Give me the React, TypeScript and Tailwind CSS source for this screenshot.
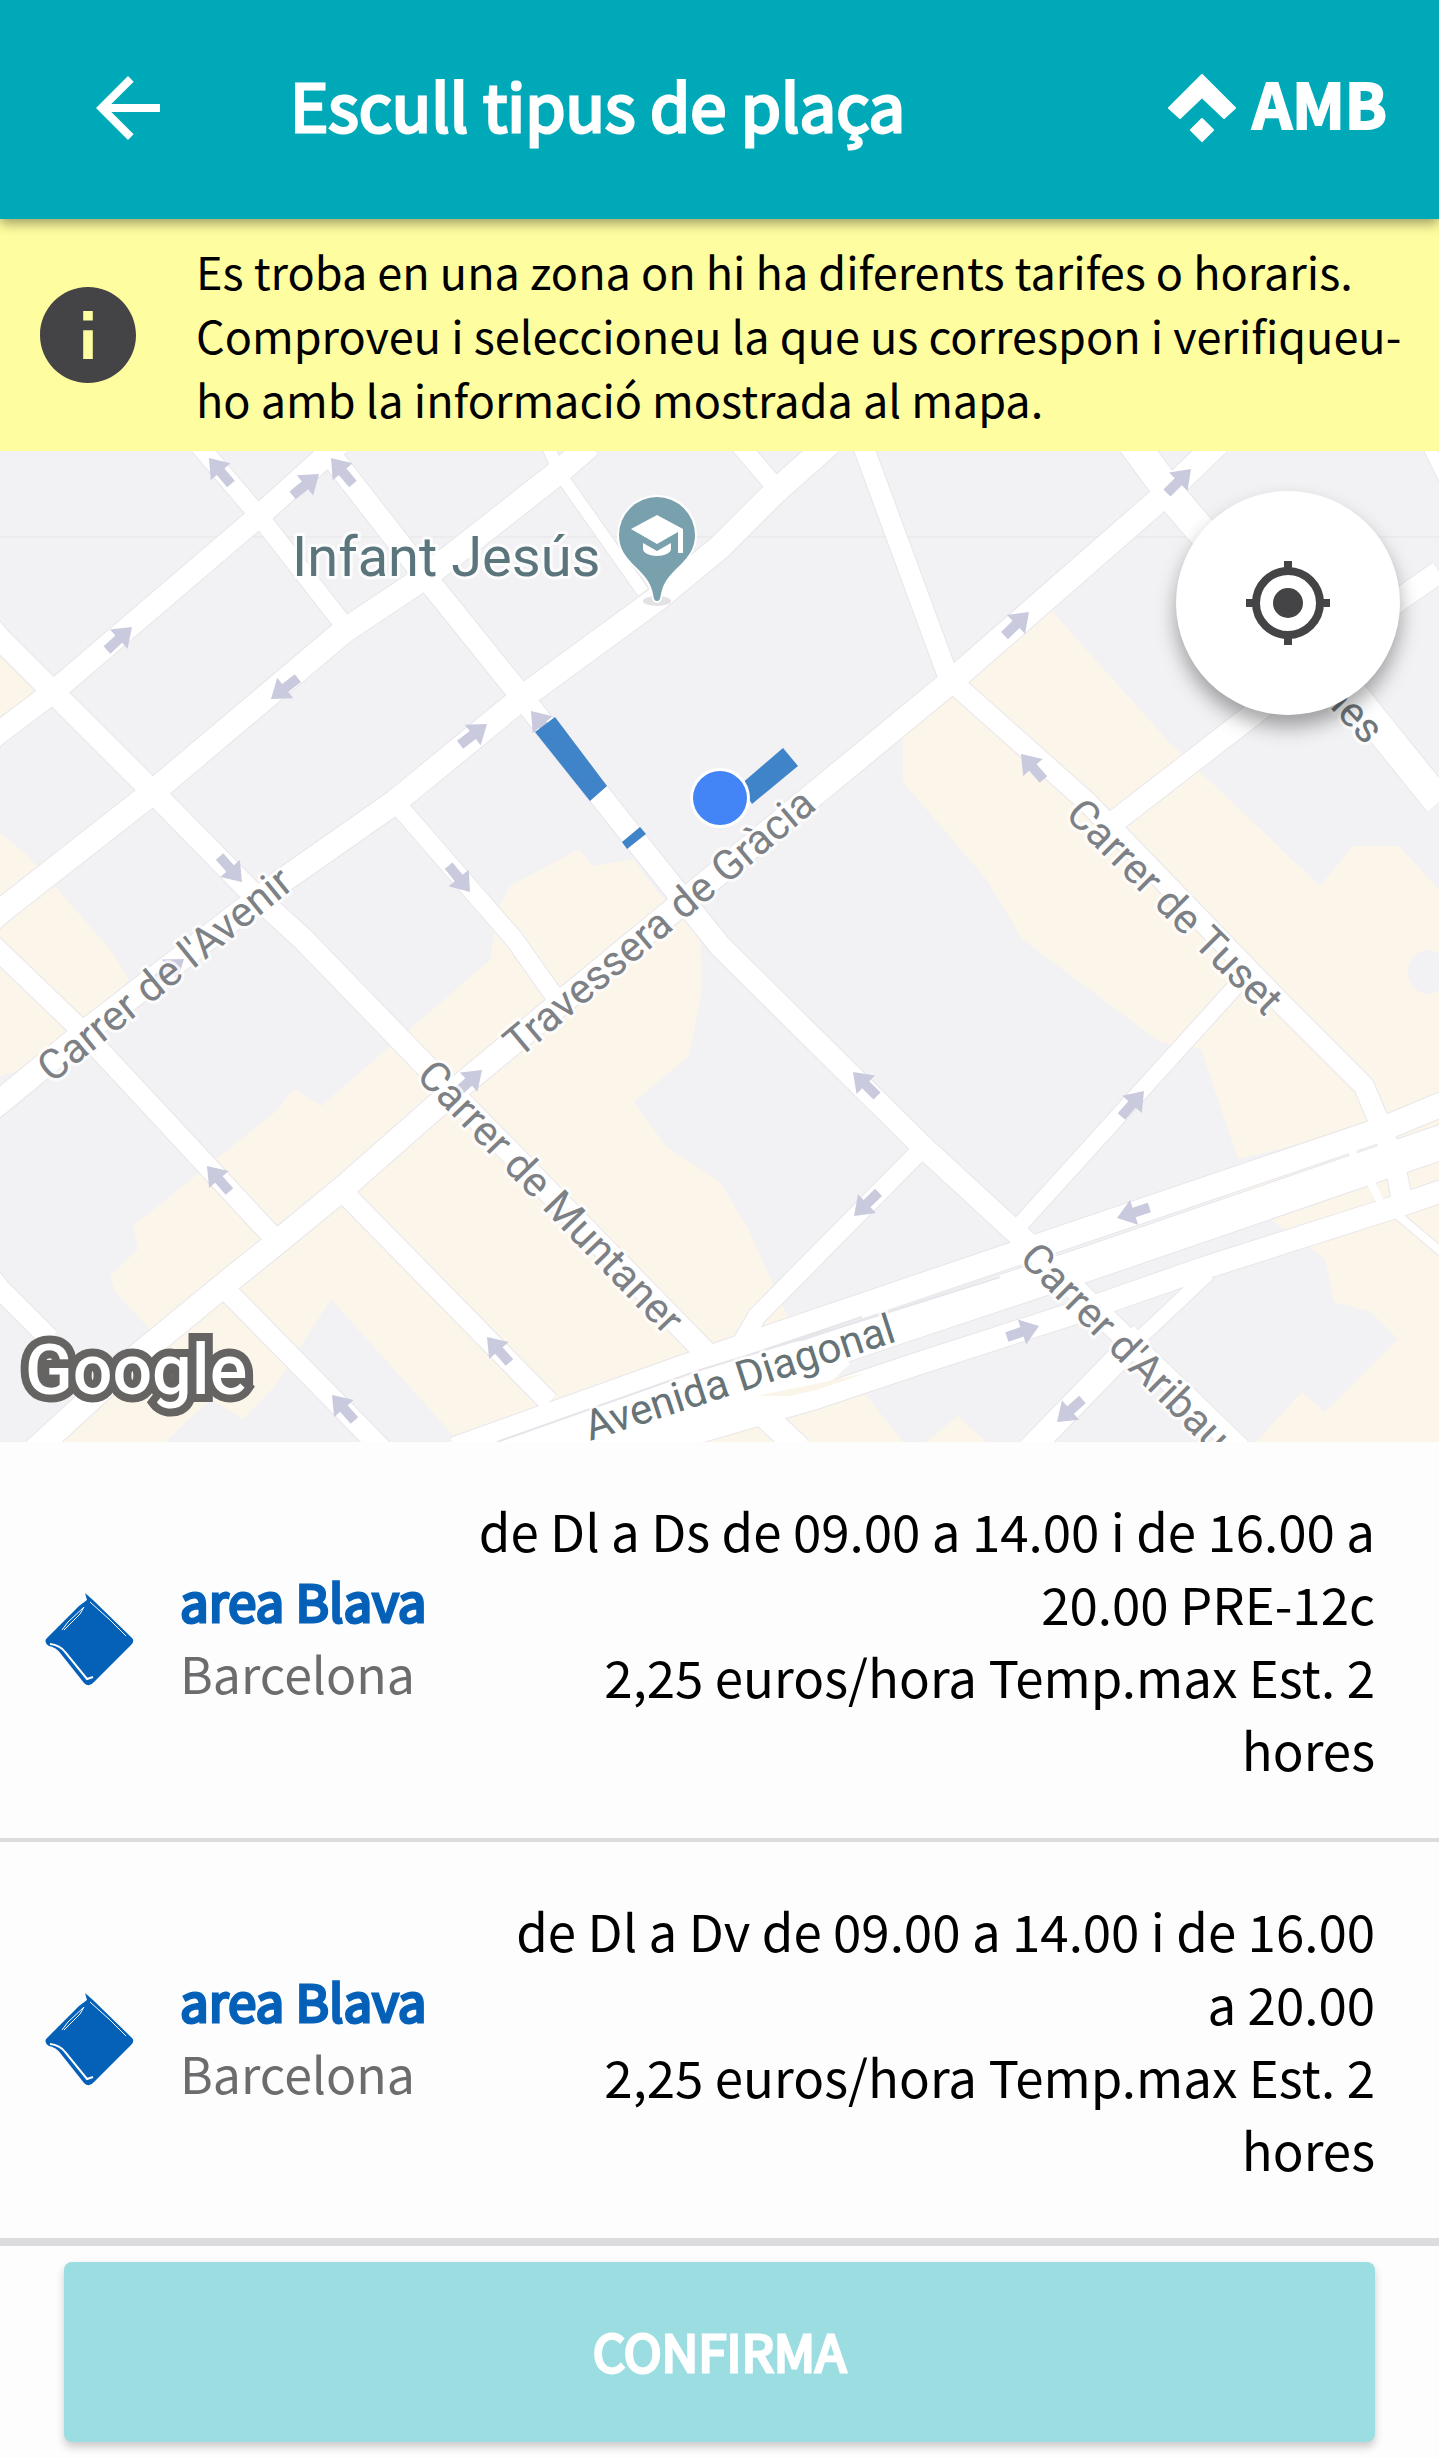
import React from 'react';

interface Zone {
  id: string;
  name: string;
  city: string;
  schedule: string;
  price: string;
}

interface Label {
  text: string;
  x: number;
  y: number;
  angle: number;
  color: string;
}

const ZONES: Zone[] = [
  {
    id: 'pre-12c',
    name: 'area Blava',
    city: 'Barcelona',
    schedule: 'de Dl a Ds de 09.00 a 14.00 i de 16.00 a 20.00 PRE-12c',
    price: '2,25 euros/hora Temp.max Est. 2 hores',
  },
  {
    id: 'dl-dv',
    name: 'area Blava',
    city: 'Barcelona',
    schedule: 'de Dl a Dv de 09.00 a 14.00 i de 16.00 a\u00a020.00',
    price: '2,25 euros/hora Temp.max Est. 2 hores',
  },
];

// Commercial blocks
const AREAS = [
  'M0 657L39 693L0 717Z',
  'M0 833L28 857L110 950L129 980L92 1027L34 1067L0 1077Z',
  'M579 850L510 887L496 913L491 960L321 1107L294 1090L275 1113L133 1227L138 1250L110 1277L115 1293L147 1327L156 1345L60 1443H165L211 1400L243 1420L275 1387L331 1300L459 1443L700 1355L789 1320L748 1230L720 1183L666 1147L634 1103L689 1057L702 990L700 930L657 893L634 860L592 867Z',
  'M1050 610L1169 743L1320 887L1353 847H1398L1439 890V1113L1238 1160L1201 1050L1160 1043L1022 940L986 880L903 783V737L949 697Z',
  'M1220 1193L1270 1220L1325 1260L1334 1303L1371 1313L1398 1340L1325 1413L1302 1393L1256 1443H1439V1110Z',
  'M650 1443L720 1400L830 1370L867 1397L903 1443Z',
  'M926 1443L958 1417L986 1443Z',
];

const ROADS: { d: string; w: number }[] = [
  { d: 'M-10 741L0 733L53 693L259 517L340 444', w: 22 },
  { d: 'M-10 922L0 913L153 793L344 632L425 578L560 472L590 446', w: 24 },
  { d: 'M-10 1111L0 1103L85 1033L275 887L395 803L523 698L657 600L720 548L775 493L830 444', w: 24 },
  { d: 'M34 1452L140 1355L230 1281L275 1245L342 1190L441 1103L528 1031L812 797L954 680L1160 500L1218 444', w: 24 },
  { d: 'M-10 628L0 640L53 693L153 793L248 890L303 940L422 1063L707 1355', w: 22 },
  { d: 'M197 444L259 517L347 630', w: 18 },
  { d: 'M321 444L427 580L521 697L680 897L720 947L922 1147L1023 1240L1240 1450', w: 22 },
  { d: 'M395 803L514 940L560 1005', w: 18 },
  { d: 'M546 444L562 478L643 593', w: 12 },
  { d: 'M738 444L780 493', w: 18 },
  { d: 'M862 444L949 680L1087 803L1284 1007L1364 1087L1380 1125L1394 1160L1403 1207', w: 20 },
  { d: 'M1133 444L1174 500L1197 527L1348 690L1439 803', w: 30 },
  { d: 'M1439 573L1400 600L1247 720L1110 826', w: 22 },
  { d: 'M1427 444L1445 480', w: 12 },
  { d: 'M-8 945L0 953L80 1030L275 1240', w: 20 },
  { d: 'M-8 1280L0 1290L50 1340', w: 20 },
  { d: 'M225 1290L382 1450', w: 20 },
  { d: 'M347 1197L549 1403', w: 20 },
  { d: 'M922 1150L757 1317L738 1350', w: 18 },
  { d: 'M1018 1228L1236 987', w: 16 },
  { d: 'M1208 1275L1142 1337', w: 14 },
  { d: 'M1142 1335L1030 1450', w: 24 },
  { d: 'M750 1403L800 1450', w: 24 },
  { d: 'M1394 1213L1445 1256', w: 8 },
  { d: 'M1445 1104L1380 1131L1041 1246L720 1355L455 1450', w: 24 },
  { d: 'M1445 1142L1087 1265L903 1326L720 1388L560 1440', w: 34 },
  { d: 'M1445 1191L1389 1210L1201 1270L1078 1313L926 1362L812 1400L640 1450', w: 22 },
];

// One-way arrows: tail x/y, tip x/y
const ARROWS = [
  [231, 485, 209, 459],
  [293, 496, 319, 475],
  [353, 485, 331, 459],
  [107, 651, 132, 628],
  [298, 679, 271, 700],
  [461, 745, 487, 725],
  [553, 738, 531, 712],
  [220, 858, 242, 883],
  [449, 867, 470, 893],
  [1168, 493, 1191, 470],
  [1004, 637, 1029, 613],
  [1043, 780, 1021, 755],
  [461, 1090, 482, 1071],
  [229, 1192, 207, 1167],
  [509, 1363, 487, 1338],
  [354, 1421, 332, 1396],
  [160, 978, 184, 960],
  [877, 1097, 853, 1073],
  [1121, 1118, 1144, 1092],
  [878, 1194, 854, 1217],
  [1148, 1209, 1117, 1219],
  [1007, 1338, 1039, 1327],
  [1082, 1401, 1057, 1423],
];

const LABELS: Label[] = [
  { text: "Carrer de l'Avenir", x: 52, y: 1085, angle: -39, color: '#7d8185' },
  { text: 'Travessera de Gràcia', x: 519, y: 1060, angle: -40, color: '#7d8185' },
  { text: 'Carrer de Muntaner', x: 415, y: 1078, angle: 46, color: '#7d8185' },
  { text: 'Carrer de Tuset', x: 1064, y: 817, angle: 45, color: '#7d8185' },
  { text: "Carrer d'Aribau", x: 1018, y: 1261, angle: 45, color: '#7d8185' },
  { text: 'Avenida Diagonal', x: 590, y: 1442, angle: -18, color: '#667377' },
  { text: 'nes', x: 1320, y: 698, angle: 47, color: '#6f777b' },
];

const ParkingMap: React.FC = () => (
  <svg viewBox="0 452 1439 991" className="block w-full h-auto bg-[#f2f1f4]" role="img" aria-label="Mapa de la zona">
    <g fill="#fcf5ea">
      {AREAS.map(d => <path key={d} d={d} />)}
    </g>
    <ellipse cx="1428" cy="973" rx="20" ry="22" fill="#f2f1f4" />
    <path d="M0 538H1439" stroke="#e6e6e9" strokeWidth="1" />

    {/* Streets: thin casing first, then the white surface */}
    <g fill="none" stroke="#e7e6ea" strokeLinejoin="round">
      {ROADS.map(r => <path key={r.d} d={r.d} strokeWidth={r.w + 2} />)}
    </g>
    <g fill="none" stroke="#fff" strokeLinejoin="round">
      {ROADS.map(r => <path key={r.d} d={r.d} strokeWidth={r.w} />)}
    </g>
    <path d="M455 1450L707 1352L760 1345L830 1340L850 1365L812 1400L650 1450Z" fill="#fff" />
    <path d="M497 1443L700 1371L870 1319L1000 1278M740 1359L862 1318" fill="none" stroke="#e7e5ea" strokeWidth="2" />
    <path d="M756 1397L810 1386L866 1374L820 1390L790 1397Z" fill="#faf5e8" />
    <path d="M1350 1143L1356 1166M1368 1178L1380 1202" stroke="#fff" strokeWidth="8" />

    <g fill="#c9cadd">
      {ARROWS.map(([x1, y1, x2, y2]) => {
        const angle = (Math.atan2(y2 - y1, x2 - x1) * 180) / Math.PI;
        return (
          <path
            key={`${x1}-${y1}`}
            d="M0 0L-18 -13V-5H-34V5H-18V13Z"
            transform={`translate(${x2} ${y2}) rotate(${angle})`}
          />
        );
      })}
    </g>

    {/* Parking stretches */}
    <g fill="#3f83c9">
      <path d="M555 718L607 787L590 802L535 733Z" />
      <path d="M640 828L646 835L627 850L622 843Z" />
      <path d="M783 749L798 767L752 805L740 786Z" />
    </g>

    <g fontFamily="Roboto, sans-serif" stroke="#fff" strokeOpacity="0.8" strokeWidth="6" strokeLinejoin="round" paintOrder="stroke">
      {LABELS.map(l => (
        <text key={l.text} fontSize="42" fill={l.color} transform={`translate(${l.x} ${l.y}) rotate(${l.angle})`}>
          {l.text}
        </text>
      ))}
      <text x="292" y="577" fontSize="56" fill="#5a757c">Infant Jesús</text>
    </g>

    <circle cx="720" cy="799" r="30" fill="#fff" />
    <circle cx="720" cy="799" r="27" fill="#4384f6" />

    {/* School pin */}
    <ellipse cx="657" cy="602" rx="14" ry="5" fill="#e2e2e5" />
    <path
      d="M657 602C653 602 654 597 652 591C646 569 619 563 619 536A38 38 0 0 1 695 536C695 563 668 569 662 591C660 597 661 602 657 602Z"
      fill="#79a0ad"
      stroke="#fff"
      strokeWidth="4"
      paintOrder="stroke"
    />
    <path d="M631 530L657 516L683 530V554H678V533L657 545ZM643 544L657 552L671 544V550C671 554 664 557 657 557C650 557 643 554 643 550Z" fill="#fff" />

    <text
      x="25"
      y="1395"
      fontFamily="Roboto, sans-serif"
      fontSize="70"
      fontWeight="500"
      fill="#fff"
      stroke="#666463"
      strokeWidth="16"
      paintOrder="stroke"
    >
      Google
    </text>
  </svg>
);

const ZoneIcon: React.FC = () => (
  <svg viewBox="0 0 90 94" className="w-[90px] h-[94px] shrink-0" aria-hidden="true">
    <path d="M41 0L49 7L88 45Q91 48 87 52L50 89Q45 95 40 90L17 61Q12 54 5 53Q-1 49 3 45L35 13L43 7Z" fill="#0560b8" />
    <path d="M18 37L24 29L40 14L36 21L20 37M46 9L66 27L82 43" fill="none" stroke="#fff" strokeWidth="1" />
    <path d="M6 51Q16 52 21 59L43 86L49 84" fill="none" stroke="#fff" strokeWidth="2" />
  </svg>
);

const ZoneRow: React.FC<{ zone: Zone }> = ({ zone }) => (
  <li className="flex items-center border-b-4 border-[#dcdbde] py-[52px] pl-11 pr-16">
    <ZoneIcon />
    <div className="ml-[46px] w-[250px] shrink-0 pb-2 leading-[72px] whitespace-nowrap">
      <h2 className="text-[51px] text-[#0560b8] [-webkit-text-stroke:3px_#0560b8]">{zone.name}</h2>
      <p className="text-[50px] text-[#6c6c6f]">{zone.city}</p>
    </div>
    <div className="ml-10 flex-1 text-right text-[51px] leading-[73px]">
      <p>{zone.schedule}</p>
      <p>{zone.price}</p>
    </div>
  </li>
);

const App: React.FC = () => {
  return (
    <div className="flex flex-col bg-[#fdfdfd] text-black font-['Noto_Sans_CJK_SC',sans-serif]">
      <header className="relative z-10 flex h-[219px] items-center bg-[#00a9b7] pb-1 pl-20 pr-[52px] text-white shadow-[0_4px_12px_rgba(0,0,0,0.4)]">
        <button type="button" aria-label="Enrere">
          <svg viewBox="0 0 24 24" className="w-24 h-24" fill="currentColor">
            <path d="M20 11H7.830l5.590-5.590L12 4l-8 8 8 8 1.410-1.410L7.830 13H20v-2z" />
          </svg>
        </button>
        <h1 className="ml-[114px] flex-1 pb-2 text-[65px] leading-[92px] [-webkit-text-stroke:3px_white]">Escull tipus de plaça</h1>
        <div className="flex items-center gap-4">
          <svg viewBox="0 0 68 68" className="w-[68px] h-[68px]" fill="currentColor" stroke="currentColor" strokeWidth="2" strokeLinejoin="round" aria-hidden="true">
            <path d="M34 1L67 34L56 44L34 23L12 44L1 34Z" />
            <path d="M34 45L45 56L34 67L23 56Z" />
          </svg>
          <span className="pb-3 text-[62px] font-bold leading-[92px] [-webkit-text-stroke:2px_white]">AMB</span>
        </div>
      </header>

      <section className="flex items-center bg-[#fefda0] py-5 pl-10 pr-4">
        <svg viewBox="2 2 20 20" className="w-24 h-24 shrink-0" fill="#444345" aria-hidden="true">
          <path d="M12 2C6.480 2 2 6.480 2 12s4.480 10 10 10 10-4.480 10-10S17.520 2 12 2zm1 15h-2v-6h2v6zm0-8h-2V7h2v2z" />
        </svg>
        <p className="ml-[60px] text-[45px] leading-[64px]">
          Es troba en una zona on hi ha diferents tarifes o horaris. Comproveu i seleccioneu la que us correspon i verifiqueu-ho amb la informació mostrada al mapa.
        </p>
      </section>

      <section className="relative">
        <ParkingMap />
        <button
          type="button"
          aria-label="La meva ubicació"
          className="absolute right-[39px] top-10 flex h-56 w-56 items-center justify-center rounded-full bg-white shadow-[0_12px_20px_rgba(0,0,0,0.35)]"
        >
          <svg viewBox="0 0 84 84" className="w-[84px] h-[84px]" fill="none" stroke="#444345">
            <circle cx="42" cy="42" r="32" strokeWidth="8" />
            <circle cx="42" cy="42" r="15" fill="#444345" stroke="none" />
            <path d="M42 0V8M42 76V84M0 42H8M76 42H84" strokeWidth="8" />
          </svg>
        </button>
      </section>

      <ul>
        {ZONES.map(zone => <ZoneRow key={zone.id} zone={zone} />)}
      </ul>

      <footer className="border-t-4 border-[#dcdbde] px-16 py-4">
        <button
          type="button"
          className="h-[180px] w-full rounded-lg bg-[#9bdde1] pb-1 text-[51px] text-white shadow-[0_5px_8px_rgba(0,0,0,0.2)] [-webkit-text-stroke:3px_white]"
        >
          CONFIRMA
        </button>
      </footer>
    </div>
  );
};

export default App;
